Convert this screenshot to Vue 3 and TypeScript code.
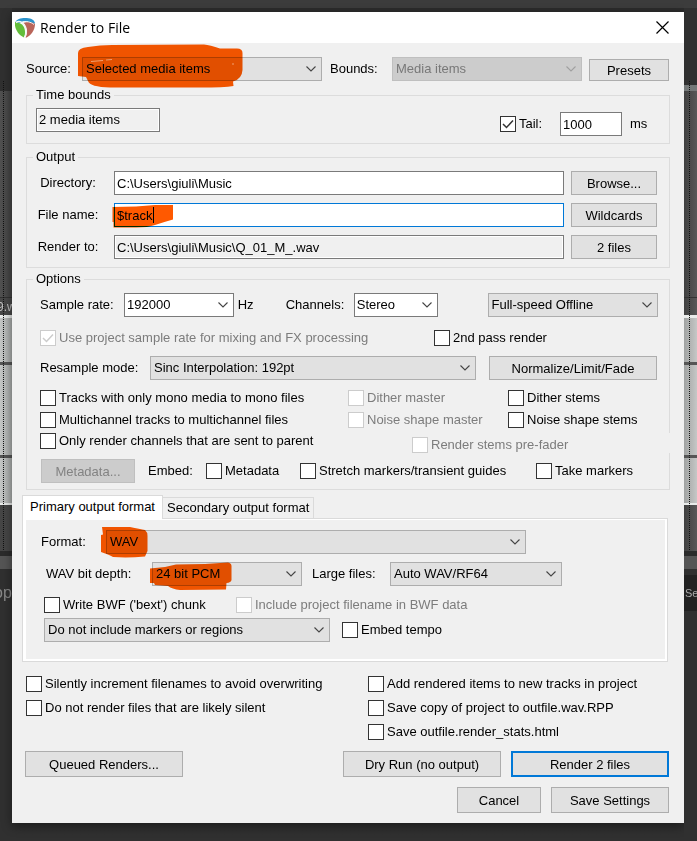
<script setup lang="ts">
import { reactive, ref } from 'vue'

const source = ref('Selected media items')
const bounds = ref('Media items')
const tailMs = ref('1000')
const directory = ref('C:\\Users\\giuli\\Music')
const fileName = ref('$track')
const renderTo = ref('C:\\Users\\giuli\\Music\\Q_01_M_.wav')
const sampleRate = ref('192000')
const channels = ref('Stereo')
const speed = ref('Full-speed Offline')
const resample = ref('Sinc Interpolation: 192pt')
const format = ref('WAV')
const bitDepth = ref('24 bit PCM')
const largeFiles = ref('Auto WAV/RF64')
const markers = ref('Do not include markers or regions')
const activeTab = ref<'primary' | 'secondary'>('primary')

const checks = reactive({
  tail: true,
  projectRate: true,
  secondPass: false,
  mono: false,
  multichannel: false,
  parentOnly: false,
  ditherMaster: false,
  noiseMaster: false,
  ditherStems: false,
  noiseStems: false,
  preFader: false,
  metadata: false,
  stretch: false,
  take: false,
  bwf: false,
  bwfName: false,
  tempo: false,
  increment: false,
  skipSilent: false,
  addItems: false,
  saveCopy: false,
  saveStats: false,
})
</script>

<template>
  <div class="desktop">
    <div class="strip left" aria-hidden="true">
      <div class="s-top"></div>
      <div class="s-dark"></div>
      <div class="s-track"></div>
      <div class="s-name">9.w</div>
      <div class="s-wave"><i></i><i></i></div>
      <div class="s-lower"></div>
      <div class="s-bar"></div>
      <div class="s-text">op</div>
    </div>

    <main class="dialog">
      <header class="titlebar">
        <svg class="logo" viewBox="0 0 20 20" width="20" height="20">
          <path d="M0 5C1 1 6 0 10 0C15 0 19 1 20 5L18 7C14 3 9 2 5 5Z" fill="#2b93cc" />
          <path d="M0 4C-1 10 3 17 9 19.500C11 15 10 9 7 6.500C5 5 2 4 0 4Z" fill="#62bd3a" />
          <path d="M8 5C13 3 18 4 20 6C20 12 16 18 10.500 20C13 14 12 9 8 5Z" fill="#b9655a" />
          <path d="M1 4.500C5 2 9 5 10.500 9C12 13 11 17 9.500 19.500" fill="none" stroke="#f5f7f4" stroke-width="1.500" />
          <path d="M6 4.500C11 2.500 16 4 19 6.500" fill="none" stroke="#f5f7f4" stroke-width="1" />
        </svg>
        <h1>Render to File</h1>
        <button class="close" type="button" aria-label="Close">
          <svg viewBox="0 0 13 13" width="13" height="13"><path d="M.5.5l12 12M12.500.5l-12 12" stroke="#000" stroke-width="1.200" fill="none" /></svg>
        </button>
      </header>

      <form class="content" @submit.prevent>
        <div class="source-row">
          <label for="source">Source:</label>
          <div class="marked">
            <select id="source" v-model="source"><option>Selected media items</option></select>
            <svg class="ink ink-source" viewBox="77 44 166 44" width="166" height="44" aria-hidden="true">
              <path d="M78 53Q78 48 88 47Q100 45 112 45L204 44.500Q210 45 220 48.500H237Q242.500 48.500 242.500 53V70Q242 79 233 81.500L233.500 86Q224 87.500 200 87.500H110Q90 87 88 81L86 77L78 76Z" />
            </svg>
            <svg class="specks" viewBox="77 44 166 44" width="166" height="44" aria-hidden="true">
              <path d="M91 61.500L103 60.500M106 60L112 59.500M232 64H234" />
            </svg>
          </div>
          <label for="bounds" class="bounds-label">Bounds:</label>
          <select id="bounds" v-model="bounds" disabled><option>Media items</option></select>
          <button type="button" class="presets">Presets</button>
        </div>

        <fieldset class="time">
          <legend>Time bounds</legend>
          <div class="time-row">
            <output class="readout">2 media items</output>
            <label class="check tail"><input v-model="checks.tail" type="checkbox" />Tail:</label>
            <input v-model="tailMs" class="field tail-ms" type="text" aria-label="Tail length" />
            <span class="unit">ms</span>
          </div>
        </fieldset>

        <fieldset class="output">
          <legend>Output</legend>
          <div class="path-row">
            <label for="directory">Directory:</label>
            <input id="directory" v-model="directory" class="field" type="text" />
            <button type="button">Browse...</button>
          </div>
          <div class="path-row">
            <label for="filename">File name:</label>
            <div class="marked">
              <input id="filename" v-model="fileName" class="field active" type="text" />
              <svg class="ink ink-name" viewBox="112 204 62 25" width="62" height="25" aria-hidden="true">
                <path d="M112.500 207L136 206.500L155 205H173V219.500Q164 222 155 225Q148 227.500 136 227.500H113.500V222H112.500Z" />
              </svg>
              <svg class="caret" viewBox="0 0 1 16" width="1" height="16" aria-hidden="true"><path d="M0 0H1V16H0Z" /></svg>
            </div>
            <button type="button">Wildcards</button>
          </div>
          <div class="path-row">
            <label for="renderto">Render to:</label>
            <input id="renderto" v-model="renderTo" class="field readonly" type="text" readonly />
            <button type="button">2 files</button>
          </div>
        </fieldset>

        <fieldset class="options">
          <legend>Options</legend>
          <div class="rate-row">
            <label for="rate">Sample rate:</label>
            <select id="rate" v-model="sampleRate" class="white"><option>192000</option></select>
            <span>Hz</span>
            <label for="channels">Channels:</label>
            <select id="channels" v-model="channels" class="white"><option>Stereo</option></select>
            <select v-model="speed" class="speed" aria-label="Render speed"><option>Full-speed Offline</option></select>
          </div>
          <div class="pass-row">
            <label class="check off"><input v-model="checks.projectRate" type="checkbox" disabled />Use project sample rate for mixing and FX processing</label>
            <label class="check"><input v-model="checks.secondPass" type="checkbox" />2nd pass render</label>
          </div>
          <div class="resample-row">
            <label for="resample">Resample mode:</label>
            <select id="resample" v-model="resample"><option>Sinc Interpolation: 192pt</option></select>
            <button type="button">Normalize/Limit/Fade</button>
          </div>
          <div class="checks-row">
            <label class="check"><input v-model="checks.mono" type="checkbox" />Tracks with only mono media to mono files</label>
            <label class="check off"><input v-model="checks.ditherMaster" type="checkbox" disabled />Dither master</label>
            <label class="check"><input v-model="checks.ditherStems" type="checkbox" />Dither stems</label>
          </div>
          <div class="checks-row">
            <label class="check"><input v-model="checks.multichannel" type="checkbox" />Multichannel tracks to multichannel files</label>
            <label class="check off"><input v-model="checks.noiseMaster" type="checkbox" disabled />Noise shape master</label>
            <label class="check"><input v-model="checks.noiseStems" type="checkbox" />Noise shape stems</label>
          </div>
          <div class="parent-row">
            <label class="check"><input v-model="checks.parentOnly" type="checkbox" />Only render channels that are sent to parent</label>
            <label class="check off prefader"><input v-model="checks.preFader" type="checkbox" disabled />Render stems pre-fader</label>
          </div>
          <div class="embed-row">
            <button type="button" disabled>Metadata...</button>
            <span>Embed:</span>
            <label class="check"><input v-model="checks.metadata" type="checkbox" />Metadata</label>
            <label class="check"><input v-model="checks.stretch" type="checkbox" />Stretch markers/transient guides</label>
            <label class="check"><input v-model="checks.take" type="checkbox" />Take markers</label>
          </div>
        </fieldset>

        <section class="formats">
          <div class="tabs" role="tablist">
            <button type="button" role="tab" class="tab" :class="{ on: activeTab === 'primary' }" :aria-selected="activeTab === 'primary'" @click="activeTab = 'primary'">Primary output format</button>
            <button type="button" role="tab" class="tab" :class="{ on: activeTab === 'secondary' }" :aria-selected="activeTab === 'secondary'" @click="activeTab = 'secondary'">Secondary output format</button>
          </div>
          <div class="panel" role="tabpanel">
            <div class="format-row">
              <label for="format">Format:</label>
              <div class="marked">
                <select id="format" v-model="format"><option>WAV</option></select>
                <svg class="ink ink-format" viewBox="100 526 49 32" width="49" height="32" aria-hidden="true">
                  <path d="M102 527H130Q140 529 145 530Q147.500 532 147.500 536V551L145 556.500Q128 558 113 557Q110 555 101 552V535L103 534.500Z" />
                </svg>
              </div>
            </div>
            <div class="depth-row">
              <label for="depth">WAV bit depth:</label>
              <div class="marked">
                <select id="depth" v-model="bitDepth"><option>24 bit PCM</option></select>
                <svg class="ink ink-depth" viewBox="149 562 83 29" width="83" height="29" aria-hidden="true">
                  <path d="M150 568.500L165 567L176 564.500L205 564L228 562.500Q231.500 563 231.500 566V580Q231 582.500 226.500 583L226 589.500L180 590Q172 589 168 586L155 585L154 583H150Z" />
                </svg>
              </div>
              <label for="large">Large files:</label>
              <select id="large" v-model="largeFiles"><option>Auto WAV/RF64</option></select>
            </div>
            <div class="bwf-row">
              <label class="check"><input v-model="checks.bwf" type="checkbox" />Write BWF ('bext') chunk</label>
              <label class="check off"><input v-model="checks.bwfName" type="checkbox" disabled />Include project filename in BWF data</label>
            </div>
            <div class="marker-row">
              <select v-model="markers" aria-label="Markers and regions"><option>Do not include markers or regions</option></select>
              <label class="check"><input v-model="checks.tempo" type="checkbox" />Embed tempo</label>
            </div>
          </div>
        </section>

        <div class="final-checks">
          <label class="check"><input v-model="checks.increment" type="checkbox" />Silently increment filenames to avoid overwriting</label>
          <label class="check"><input v-model="checks.addItems" type="checkbox" />Add rendered items to new tracks in project</label>
          <label class="check"><input v-model="checks.skipSilent" type="checkbox" />Do not render files that are likely silent</label>
          <label class="check"><input v-model="checks.saveCopy" type="checkbox" />Save copy of project to outfile.wav.RPP</label>
          <label class="check second"><input v-model="checks.saveStats" type="checkbox" />Save outfile.render_stats.html</label>
        </div>

        <div class="actions">
          <button type="button" class="wide queued">Queued Renders...</button>
          <button type="button" class="wide">Dry Run (no output)</button>
          <button type="submit" class="wide primary">Render 2 files</button>
        </div>
        <div class="actions end">
          <button type="button" class="cancel">Cancel</button>
          <button type="button" class="save">Save Settings</button>
        </div>
      </form>
    </main>

    <div class="strip right" aria-hidden="true">
      <div class="s-top"></div>
      <div class="s-dark"></div>
      <div class="s-track"></div>
      <div class="s-name"></div>
      <div class="s-wave"><i></i><i></i></div>
      <div class="s-lower"></div>
      <div class="s-bar"></div>
      <div class="s-text">Se</div>
    </div>
  </div>
</template>

<style>
body {
  margin: 0;
  background: #303030;
}
</style>

<style scoped>
.desktop,
.desktop * {
  box-sizing: border-box;
}
.desktop {
  display: grid;
  grid-template-columns: 12px minmax(0, 1fr) 13px;
  min-height: 100vh;
  background: linear-gradient(#3c3c3c 8px, #2c2c2c 8px, #303030 100%);
  font: 13px/16px "Liberation Sans", Arial, sans-serif;
  color: #000;
}

/* Editor window visible on both sides of the dialog */
.strip {
  display: flex;
  flex-direction: column;
  overflow: hidden;
  position: relative;
  white-space: nowrap;
}
.strip::before {
  content: "";
  position: absolute;
  top: 81px;
  left: 3px;
  height: 469px;
  border-left: 1px dotted #111;
}
.strip.right::before {
  left: 5px;
}
.s-top { height: 8px; background: #3c3c3c; }
.s-dark { height: 83px; background: #303030; }
.right .s-dark { border-bottom: 6px solid #747878; }
.s-track { height: 207px; background: linear-gradient(90deg, #515151, #434343); border-bottom: 1px solid #333; }
.s-name {
  height: 17px;
  background: #484848;
  color: #c0c0c0;
  font-size: 12px;
  line-height: 18px;
  text-indent: -3px;
}
.s-wave {
  display: flex;
  flex-direction: column;
  height: 190px;
  padding-top: 44px;
  gap: 90px;
  background: linear-gradient(90deg, #c5c7c6, #a9abaa);
  border: solid #e9ebea;
  border-width: 3px 0 2px;
}
.s-wave i { height: 3px; background: #555; }
.s-lower { height: 51px; background: #464646; border-bottom: 5px solid #2b2b2b; }
.s-bar { height: 13px; background: #555; }
.s-text {
  flex: 1;
  padding-top: 16px;
  background: #303030;
  color: #888;
  font-size: 16px;
  text-indent: -6px;
}
.right .s-track, .right .s-name, .right .s-lower { background: linear-gradient(90deg, #404040, #585858); }
.right .s-wave { background: linear-gradient(90deg, #a0a2a1, #c5c7c6); }
.right .s-text {
  background: linear-gradient(#303030 6px, #222 6px, #222 42px, #303030 42px);
  font-size: 11px;
  text-indent: 1px;
  color: #aaa;
}

.dialog {
  align-self: start;
  margin: 12px 0 18px;
  background: #f0f0f0;
  box-shadow: 0 3px 10px rgba(0, 0, 0, 0.45);
  white-space: nowrap;
  position: relative;
}
.titlebar {
  display: flex;
  align-items: center;
  height: 31px;
  padding: 0 14px 0 3px;
  background: #fff;
}
h1 {
  flex: 1;
  margin: 0 0 0 5px;
  font: 400 14px/20px "Open Sans", "Noto Sans", sans-serif;
}
.logo, .close svg { display: block; }
.close {
  width: 14px;
  height: 14px;
  padding: 0;
  border: 0;
  background: none;
}
.content { padding: 14px 15px 10px 14px; }

/* Controls */
button, select, .field { font: inherit; color: #000; margin: 0; }
button {
  height: 24px;
  padding: 1px 0 0;
  border: 1px solid #adadad;
  border-radius: 0;
  background: #e1e1e1;
}
button:disabled { background: #ccc; border-color: #bfbfbf; color: #838383; }
select {
  display: block;
  appearance: none;
  width: 100%;
  min-width: 0;
  height: 24px;
  padding: 0 20px 0 3px;
  border: 1px solid #adadad;
  border-radius: 0;
  background: #e1e1e1 url("data:image/svg+xml,%3Csvg xmlns='http://www.w3.org/2000/svg' width='10' height='6'%3E%3Cpath d='M.5.5L5 5L9.500.5' fill='none' stroke='%23444' stroke-width='1.100'/%3E%3C/svg%3E") no-repeat right 5px center;
}
select:disabled {
  background: #ccc url("data:image/svg+xml,%3Csvg xmlns='http://www.w3.org/2000/svg' width='10' height='6'%3E%3Cpath d='M.5.5L5 5L9.500.5' fill='none' stroke='%23a0a0a0' stroke-width='1.100'/%3E%3C/svg%3E") no-repeat right 5px center;
  border-color: #bfbfbf;
  color: #787878;
  opacity: 1;
}
select.white { background-color: #fff; border-color: #7a7a7a; padding-left: 2px; }
.field {
  display: block;
  width: 100%;
  min-width: 0;
  height: 24px;
  padding: 0 2px;
  border: 1px solid #7a7a7a;
  border-radius: 0;
  background: #fff;
  outline: none;
}
.field.active { border-color: #0078d7; }
.field.readonly, .readout {
  background: #f0f0f0;
  box-shadow: inset 0 0 0 1px #fff;
}
.readout {
  width: 124px;
  height: 24px;
  padding: 3px 2px;
  border: 1px solid #7a7a7a;
}
.check {
  display: flex;
  align-items: center;
  gap: 3px;
  height: 16px;
}
.check input {
  appearance: none;
  flex: none;
  width: 16px;
  height: 16px;
  margin: 0;
  border: 1px solid #333;
  background: #fff no-repeat center;
}
.check input:checked {
  background-image: url("data:image/svg+xml,%3Csvg xmlns='http://www.w3.org/2000/svg' width='12' height='10'%3E%3Cpath d='M1 5L4.500 8.500L11 1.500' fill='none' stroke='%23333' stroke-width='1.500'/%3E%3C/svg%3E");
}
.check.off { color: #7c7c7c; }
.check.off input { border-color: #ccc; }
.check.off input:checked {
  background-image: url("data:image/svg+xml,%3Csvg xmlns='http://www.w3.org/2000/svg' width='12' height='10'%3E%3Cpath d='M1 5L4.500 8.500L11 1.500' fill='none' stroke='%23ccc' stroke-width='1.500'/%3E%3C/svg%3E");
}

/* Marker-pen strokes laid over the controls */
.marked { position: relative; min-width: 0; }
.ink, .specks, .caret { position: absolute; pointer-events: none; }
.ink { mix-blend-mode: multiply; fill: #ff5900; }
.ink-source, .specks { left: -5px; top: -13px; }
.specks { fill: none; stroke: #efa070; stroke-width: 1; }
.ink-name { left: -2px; top: 1px; }
.ink-format { left: -6px; top: -4px; }
.ink-depth { left: -3px; top: 0; }
.caret { left: 39px; top: 4px; }

/* Groups */
fieldset {
  min-width: 0;
  margin: 0 -1px 0 0;
  border: 1px solid #dcdcdc;
  padding: 6px 12px 8px 13px;
}
legend { height: 16px; margin-left: -7px; padding: 0 3px; }
.source-row {
  display: grid;
  grid-template-columns: 56px minmax(0, 240fr) 70px minmax(0, 190fr) 87px;
  align-items: center;
}
.bounds-label { padding-left: 8px; }
.presets { height: 22px; margin-left: 7px; align-self: end; }

.time { margin-top: 6px; padding: 5px 20px 7px 9px; }
.time legend { margin-left: -3px; }
.time-row { display: flex; height: 28px; align-items: flex-start; }
.tail { width: 60px; margin: 8px 0 0 auto; }
.tail-ms { width: 62px; margin-top: 4px; }
.unit { width: 27px; margin-top: 8px; padding-left: 8px; }

.output { display: grid; gap: 8px; margin-top: 5px; padding-left: 9px; }
.output legend { margin-left: -3px; }
.path-row {
  display: grid;
  grid-template-columns: 71px minmax(0, 1fr) 86px;
  column-gap: 7px;
  align-items: center;
}
.path-row label { justify-self: center; padding-right: 7px; }

.options { margin-top: 3px; padding-bottom: 6px; }
.rate-row {
  display: grid;
  grid-template-columns: 84px minmax(0, 110fr) 52px 68px minmax(0, 84fr) minmax(0, 220fr);
  align-items: center;
}
.rate-row span { padding-left: 4px; }
.speed { width: auto; margin: 0 -1px 0 50px; }
.pass-row {
  display: grid;
  grid-template-columns: 394fr 223fr;
  margin-top: 13px;
}
.resample-row {
  display: grid;
  grid-template-columns: 110px minmax(0, 1fr) 168px;
  align-items: center;
  margin-top: 10px;
}
.resample-row select { width: auto; margin-right: 13px; }
.checks-row {
  display: grid;
  grid-template-columns: 308fr 160fr 149fr;
  margin-top: 6px;
}
.resample-row + .checks-row { margin-top: 10px; }
.parent-row {
  display: grid;
  grid-template-columns: 372fr 258fr;
  align-items: end;
  height: 20px;
  margin: 5px -13px 0 0;
}
.parent-row .check:first-child { align-self: start; }
.prefader { background: #f0f0f0; height: 20px; padding-top: 4px; }
.embed-row {
  display: grid;
  grid-template-columns: 94px 45px 81px minmax(0, 1fr) 121px;
  column-gap: 13px;
  align-items: center;
  margin: 6px 0 0 1px;
}

/* Output format tabs */
.formats { margin: 5px 1px 0 -4px; }
.tabs { display: flex; align-items: flex-end; }
.tab {
  height: 21px;
  padding: 0 4px;
  border: 1px solid #dadada;
  border-bottom: 0;
  background: #f0f0f0;
}
.tab + .tab { border-left: 0; }
.tab.on {
  position: relative;
  height: 24px;
  margin-bottom: -1px;
  padding: 0 7px 2px;
  background: #fff;
}
.panel {
  padding: 9px 6px 19px 18px;
  border: 1px solid #dadada;
  background: #f0f0f0;
  box-shadow: inset 3px 0 #fff, inset 0 1px #fff, inset -2px -2px #fff;
}
.format-row {
  display: grid;
  grid-template-columns: 65px minmax(0, 420fr) minmax(0, 135fr);
  align-items: center;
  margin-top: 2px;
}
.depth-row {
  display: grid;
  grid-template-columns: 101px minmax(0, 150fr) 68px minmax(0, 172fr) minmax(0, 89fr);
  column-gap: 10px;
  align-items: center;
  margin-top: 8px;
}
.depth-row label:first-child { padding-left: 5px; }
.bwf-row {
  display: grid;
  grid-template-columns: 192fr 425fr;
  margin: 11px 0 0 3px;
}
.marker-row {
  display: grid;
  grid-template-columns: minmax(0, 286fr) minmax(0, 319fr);
  column-gap: 12px;
  align-items: center;
  margin: 5px 0 0 3px;
}

.final-checks {
  display: grid;
  grid-template-columns: 342fr 301fr;
  row-gap: 8px;
  margin-top: 14px;
}
.second { grid-column: 2; }
.actions {
  display: flex;
  gap: 10px;
  margin: 11px 0 0 -1px;
}
.actions button { height: 26px; padding-top: 1px; }
.wide { flex: 0 1 158px; }
.queued { margin-right: auto; }
.primary { border: 2px solid #0078d7; }
.end { justify-content: flex-end; margin-top: 10px; }
.cancel { width: 84px; }
.save { width: 118px; }
</style>
